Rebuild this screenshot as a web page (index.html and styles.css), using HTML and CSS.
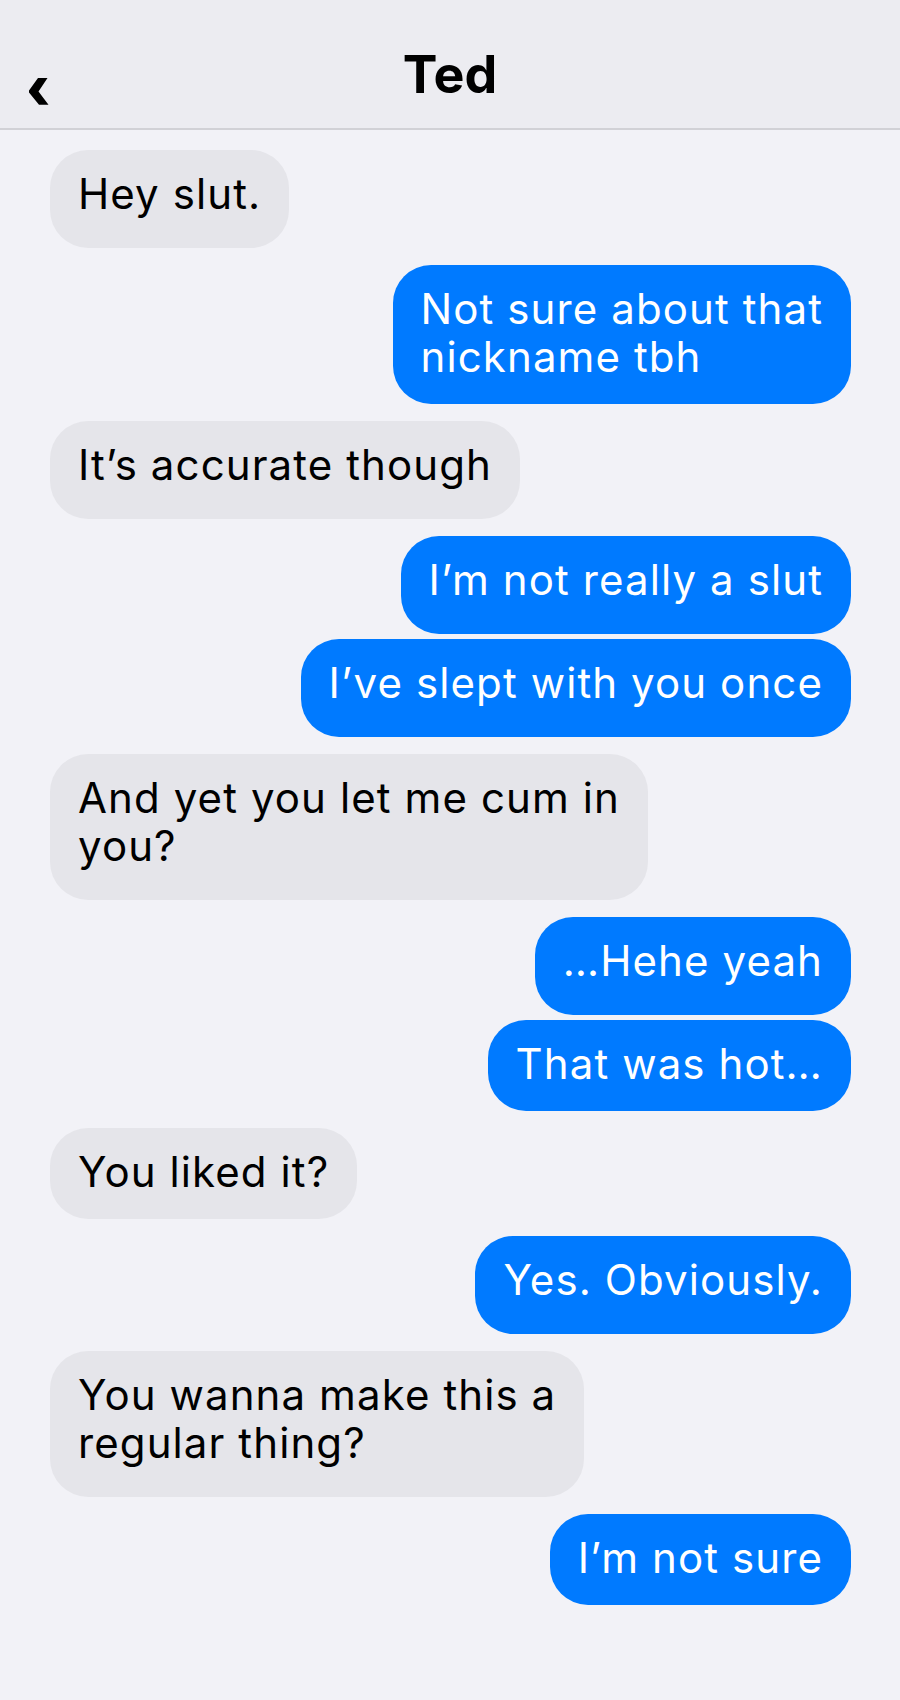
FILE: index.html
```html
<!DOCTYPE html>
<html lang="en">
<head>
    <meta charset="UTF-8">
    <meta name="viewport" content="width=device-width, initial-scale=1.0">
    <title>Ted</title>
    <link rel="stylesheet" href="styles.css">
</head>
<body>
    <header class="nav-bar">
        <a class="back-btn" href="#" aria-label="Back">
            <svg width="20" height="27" viewBox="0 0 20 27">
                <polygon points="9,0 18.5,0 9.5,13.5 19.5,26.7 10,26.7 0,14.6 0,12.6" fill="#000"/>
            </svg>
        </a>
        <h1 class="contact-name">Ted</h1>
        <span></span>
    </header>

    <main class="thread">
        <div class="bubble them">Hey slut.</div>
        <div class="bubble me flat">Not sure about that<br>nickname tbh</div>
        <div class="bubble them">It’s accurate though</div>
        <div class="bubble me">I’m not really a slut</div>
        <div class="bubble me">I’ve slept with you once</div>
        <div class="bubble them">And yet you let me cum in<br>you?</div>
        <div class="bubble me">…Hehe yeah</div>
        <div class="bubble me flat">That was hot…</div>
        <div class="bubble them flat">You liked it?</div>
        <div class="bubble me">Yes. Obviously.</div>
        <div class="bubble them">You wanna make this a<br>regular thing?</div>
        <div class="bubble me flat">I’m not sure</div>
    </main>
</body>
</html>
```

FILE: styles.css
```css
body {
    margin: 0;
    min-height: 100vh;
    background: #f2f2f7;
    font-family: Inter, "Noto Sans", sans-serif;
    color: #000;
}

/* Top bar */
.nav-bar {
    display: grid;
    grid-template-columns: 1fr auto 1fr;
    align-items: start;
    height: 130px;
    box-sizing: border-box;
    padding-top: 49px;
    background: #ececf1;
    border-bottom: 2px solid #d1d1d6;
}

.back-btn {
    display: block;
    width: 20px;
    margin: 29px 0 0 29px;
}

.back-btn svg {
    display: block;
}

.contact-name {
    margin: 0;
    font-size: 52px;
    line-height: 52px;
    font-weight: 700;
}

/* Messages */
.thread {
    display: flex;
    flex-direction: column;
    padding: 20px 49px 40px 50px;
}

.bubble {
    max-width: 700px;
    box-sizing: border-box;
    padding: 20px 28px 30px;
    border-radius: 38px;
    font-size: 42px;
    line-height: 48px;
    letter-spacing: 1.1px;
    margin-top: 17px;
}

.bubble:first-child {
    margin-top: 0;
}

/* consecutive messages from the same side sit closer */
.bubble.them + .bubble.them,
.bubble.me + .bubble.me {
    margin-top: 5px;
}

/* last line without descenders gets a shorter bottom */
.bubble.flat {
    padding-bottom: 23px;
}

.them {
    align-self: flex-start;
    background: #e5e5ea;
    color: #000;
}

.me {
    align-self: flex-end;
    background: #007aff;
    color: #fff;
}
```
